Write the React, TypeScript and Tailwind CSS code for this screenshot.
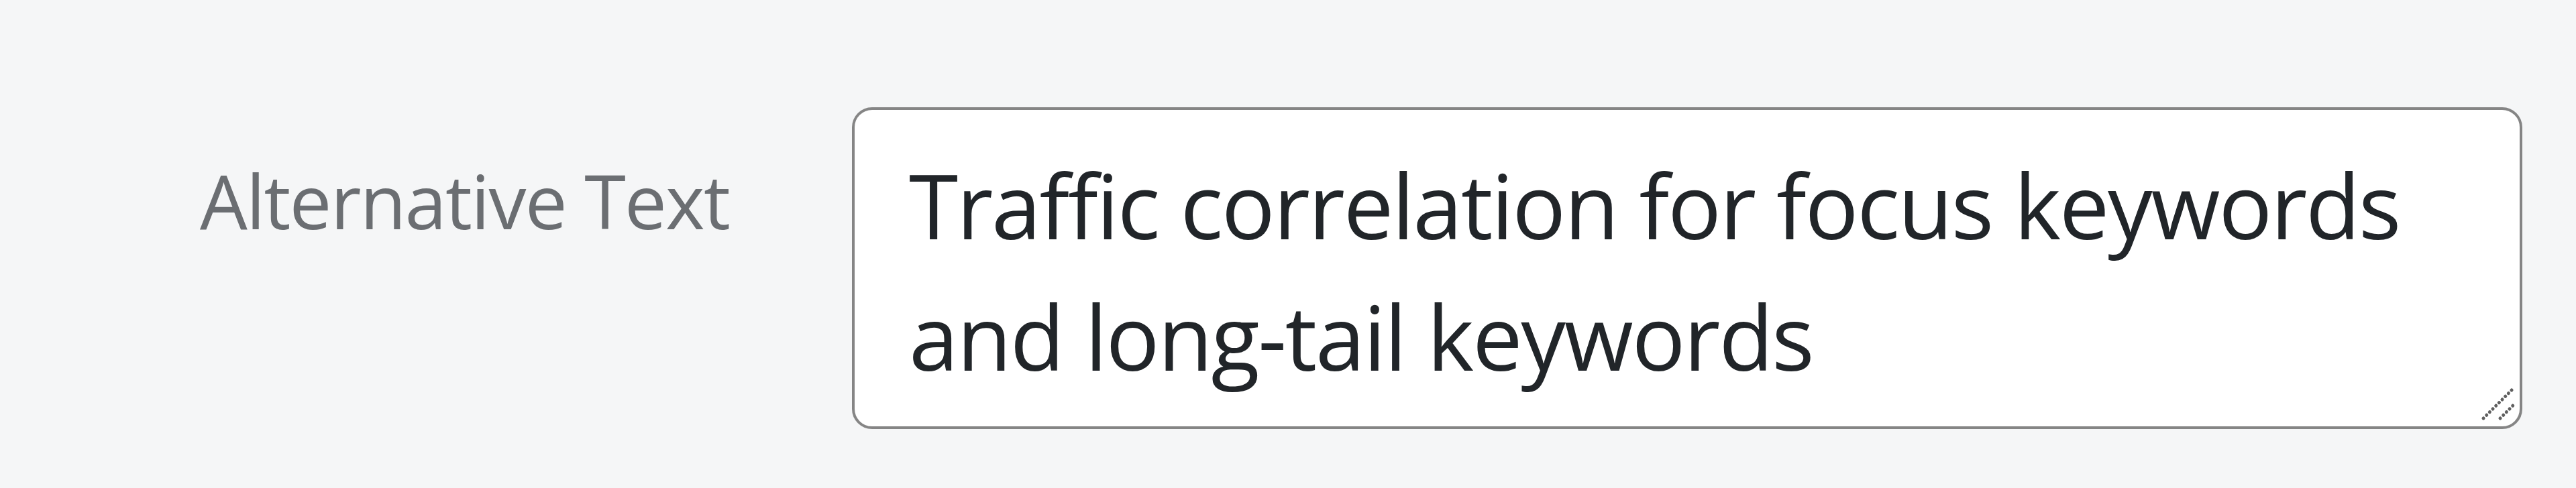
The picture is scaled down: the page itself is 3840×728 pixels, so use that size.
import React from "react";

export default function App() {
  return (
    <div
      className="w-full h-[728px] bg-[#f5f6f7] flex items-start pt-[160px] pl-[298px]"
      style={{ fontFamily: '"Open Sans", "Noto Sans", sans-serif' }}
    >
      <label className="w-[972px] shrink-0 mt-[55px] text-[112px] leading-[168px] tracking-[-1.8px] text-[#6b6e72]">
        Alternative Text
      </label>
      <div className="relative w-[2490px] h-[480px] shrink-0">
        <textarea
          readOnly
          value="Traffic correlation for focus keywords and long-tail keywords"
          className="block w-full h-full resize-none bg-white border-[4px] border-[#858585] rounded-[30px] pt-[44px] pl-[81px] pr-[60px] text-[133px] leading-[196px] tracking-[-2.3px] text-[#212529] outline-none overflow-hidden"
          style={{ fontFamily: '"Open Sans", "Noto Sans", sans-serif' }}
        />
        <svg
          className="absolute right-[10px] bottom-[10px] pointer-events-none"
          width="54"
          height="54"
          viewBox="0 0 54 54"
        >
          <line x1="6" y1="48" x2="50" y2="4" stroke="#5f5f5f" strokeWidth="5" strokeDasharray="0.1 6.5" strokeLinecap="round" />
          <line x1="31" y1="48" x2="50" y2="29" stroke="#5f5f5f" strokeWidth="5" strokeDasharray="0.1 6.5" strokeLinecap="round" />
        </svg>
      </div>
    </div>
  );
}
